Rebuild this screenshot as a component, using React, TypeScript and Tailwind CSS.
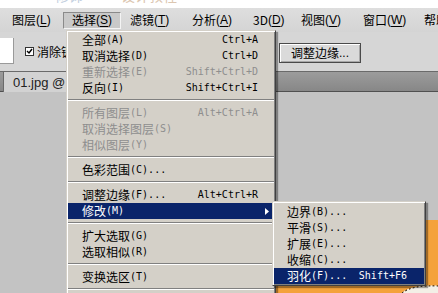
import React from 'react';

type Item =
  | 'sep'
  | { zh: string; k: string; sc?: string; dots?: boolean; dis?: boolean; sub?: boolean; active?: boolean };

const CJK = "font-['Noto_Sans_CJK_SC',sans-serif]";
const MONO = "font-['DejaVu_Sans_Mono','Noto_Sans_CJK_SC',monospace]";

const MENU_BAR = [
  { zh: '图层', k: 'L', w: 'w-[59px]' },
  { zh: '选择', k: 'S', w: 'w-[59px]', open: true },
  { zh: '滤镜', k: 'T', w: 'w-[62px]' },
  { zh: '分析', k: 'A', w: 'w-[61px]' },
  { zh: '3D', k: 'D', w: 'w-[48px]' },
  { zh: '视图', k: 'V', w: 'w-[62px]' },
  { zh: '窗口', k: 'W', w: 'w-[61px]' },
  { zh: '帮助', k: 'H', w: 'w-[61px]' },
];

const SELECT_MENU: Item[] = [
  { zh: '全部', k: 'A', sc: 'Ctrl+A' },
  { zh: '取消选择', k: 'D', sc: 'Ctrl+D' },
  { zh: '重新选择', k: 'E', sc: 'Shift+Ctrl+D', dis: true },
  { zh: '反向', k: 'I', sc: 'Shift+Ctrl+I' },
  'sep',
  { zh: '所有图层', k: 'L', sc: 'Alt+Ctrl+A', dis: true },
  { zh: '取消选择图层', k: 'S', dis: true },
  { zh: '相似图层', k: 'Y', dis: true },
  'sep',
  { zh: '色彩范围', k: 'C', dots: true },
  'sep',
  { zh: '调整边缘', k: 'F', dots: true, sc: 'Alt+Ctrl+R' },
  { zh: '修改', k: 'M', sub: true, active: true },
  'sep',
  { zh: '扩大选取', k: 'G' },
  { zh: '选取相似', k: 'R' },
  'sep',
  { zh: '变换选区', k: 'T' },
  'sep',
  { zh: '在快速蒙版模式下编辑', k: 'Q' },
];

const MODIFY_MENU: Item[] = [
  { zh: '边界', k: 'B', dots: true },
  { zh: '平滑', k: 'S', dots: true },
  { zh: '扩展', k: 'E', dots: true },
  { zh: '收缩', k: 'C', dots: true },
  { zh: '羽化', k: 'F', dots: true, sc: 'Shift+F6', active: true },
];

const menuFrame =
  'bg-[#d4d0c8] border border-t-[#d4d0c8] border-l-[#d4d0c8] border-r-[#404040] border-b-[#404040] p-px shadow-[inset_1px_1px_0_#fff,inset_-1px_-1px_0_#808080,2px_2px_1px_rgba(0,0,0,0.35)]';

function MenuRows({ items, pl, pr }: { items: Item[]; pl: string; pr: string }) {
  return (
    <>
      {items.map((it, i) => {
        if (it === 'sep') {
          return (
            <div key={i} className="h-[9px] pt-[3px]">
              <div className="h-px bg-[#808080]" />
              <div className="h-px bg-white" />
            </div>
          );
        }
        const color = it.active ? 'bg-[#0a246a] text-white' : it.dis ? 'text-[#8e8e8e]' : 'text-black';
        return (
          <div key={i} className={`flex h-[16px] items-center justify-between leading-none ${pl} ${pr} ${color}`}>
            <span className="flex items-center whitespace-nowrap">
              <span className={`${CJK} text-[12px]`}>{it.zh}</span>
              <span className={`${MONO} text-[10px]`}>
                ({it.k}){it.dots ? '...' : ''}
              </span>
            </span>
            {it.sc && <span className={`${MONO} text-[10px] whitespace-nowrap`}>{it.sc}</span>}
            {it.sub && (
              <svg width="4" height="7" viewBox="0 0 4 7" className="-mr-[11px]">
                <path d="M0 0 L4 3.5 L0 7 Z" fill="#fff" />
              </svg>
            )}
          </div>
        );
      })}
    </>
  );
}

export default function App() {
  return (
    <div className="relative flex h-[293px] w-[438px] flex-col overflow-hidden bg-[#c3c3c3]">
      {/* cut-off page header */}
      <div className="h-[8px] overflow-hidden bg-white">
        <div className={`${CJK} flex -translate-y-[15px] text-[14px] leading-[20px] text-[#c4d0e0]`}>
          <span className="ml-[55px]">修饰</span>
          <span className="ml-[38px] text-[#dcc6b0]">设计教程</span>
        </div>
      </div>

      {/* menu bar */}
      <div className="flex h-[24px] items-center bg-gradient-to-b from-[#dedede] to-[#d4d4d4] pl-[4px]">
        {MENU_BAR.map((m) => (
          <div key={m.zh} className={`${m.w} flex shrink-0 items-center`}>
            <div
              className={`flex h-[17px] items-center whitespace-nowrap pl-[8px] pr-[6px] text-[12px] leading-none text-black ${
                m.open ? 'w-[58px] border border-t-[#8a8a8a] border-l-[#8a8a8a] border-r-[#f4f4f4] border-b-[#f4f4f4] bg-[#c9c9c9] pl-[7px]' : ''
              }`}
            >
              <span className={`${CJK} ${m.zh === '3D' ? "font-['Liberation_Sans',sans-serif]" : ''}`}>{m.zh}</span>
              <span className="font-['Liberation_Sans',sans-serif]">
                (<span className="underline underline-offset-2">{m.k}</span>)
              </span>
            </div>
          </div>
        ))}
      </div>

      {/* options bar */}
      <div className="flex h-[39px] items-center bg-[#d6d6d6]">
        <div className="mt-[-2px] h-[26px] w-[14px] border-r border-b border-r-[#9a9a9a] border-b-[#9a9a9a] bg-white" />
        <div className="ml-[11px] flex h-[9px] w-[9px] items-center justify-center border border-[#333] bg-white">
          <svg width="7" height="7" viewBox="0 0 7 7">
            <path d="M1 3 L3 5 L6 1" stroke="#000" strokeWidth="1.4" fill="none" />
          </svg>
        </div>
        <span className={`${CJK} ml-[3px] whitespace-nowrap text-[12px] leading-none text-black`}>消除锯齿</span>
        <div className="ml-[194px] mt-[3px] flex h-[20px] w-[82px] items-center justify-center border border-[#4a4a4a] bg-[#dadada] shadow-[inset_1px_1px_0_#fff,inset_-1px_-1px_0_#a8a8a8]">
          <span className={`${CJK} text-[12px] leading-none text-black`}>调整边缘</span>
          <span className="font-['Liberation_Sans',sans-serif] text-[12px] leading-none">...</span>
        </div>
      </div>

      {/* document tab row */}
      <div className="flex h-[21px] border-t border-b border-t-[#6a6a6a] border-b-[#505050] bg-gradient-to-b from-[#9c9c9c] to-[#878787]">
        <div className="ml-[3px] flex h-[20px] w-[120px] shrink-0 items-center border-l border-l-[#6a6a6a] bg-[#d2d2d2] pl-[9px]">
          <span className="whitespace-nowrap font-['Liberation_Sans',sans-serif] text-[13px] leading-none text-[#222]">01.jpg @ 100%</span>
        </div>
      </div>

      {/* canvas */}
      <div className="flex flex-1 pl-[200px] pt-[128px]">
        <div className="relative flex-1 bg-[#f4a23b]">
          <svg width="40" height="10" viewBox="0 0 40 10" className="absolute right-0 bottom-0">
            <path d="M4 10 Q14 2 40 3 L40 10 Z" fill="#f3efe6" />
            <path d="M4 10 Q14 2 40 3" stroke="#000" strokeWidth="1" strokeDasharray="2 2" fill="none" />
            <path d="M4 10 Q14 2 40 3" stroke="#fff" strokeWidth="1" strokeDasharray="2 2" strokeDashoffset="2" fill="none" />
          </svg>
        </div>
      </div>

      {/* 选择 dropdown */}
      <div className={`absolute top-[30px] left-[66px] w-[210px] ${menuFrame}`}>
        <MenuRows items={SELECT_MENU} pl="pl-[14px]" pr="pr-[16px]" />
      </div>

      {/* 修改 submenu */}
      <div className={`absolute top-[201px] left-[272px] w-[154px] pt-[2px] ${menuFrame}`}>
        <MenuRows items={MODIFY_MENU} pl="pl-[13px]" pr="pr-[17px]" />
      </div>
    </div>
  );
}
